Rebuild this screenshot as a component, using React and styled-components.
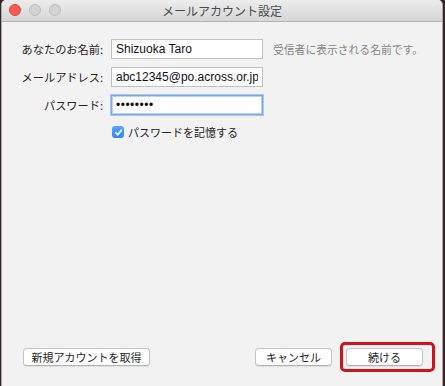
import React from "react";
import styled, { createGlobalStyle } from "styled-components";

const Global = createGlobalStyle`
  html, body { margin: 0; padding: 0; background: #3a2424; height: 386px; overflow: hidden; }
  #root { height: 386px; }
  * { box-sizing: border-box; }
`;

const Window = styled.div`
  margin-left: 1px;
  width: 442px;
  height: 386px;
  background: #f2f2f2;
  border-left: 1px solid #a8a8a8;
  border-right: 1px solid #a8a8a8;
  border-radius: 5px 5px 0 0;
  overflow: hidden;
  display: flex;
  flex-direction: column;
  font-family: "Liberation Sans", "Noto Sans CJK JP", sans-serif;
  color: #1e1e1e;
`;

const TitleBar = styled.div`
  height: 22px;
  flex: none;
  background: linear-gradient(#ececec, #d6d6d6);
  border-bottom: 1px solid #b2b2b2;
  display: flex;
  align-items: center;
  position: relative;
  padding-left: 7px;
  gap: 8px;
`;

const Light = styled.span`
  width: 12px;
  height: 12px;
  border-radius: 50%;
  background: ${(p) => (p.$red ? "#fc5b55" : "#d2d2d2")};
  border: 1px solid ${(p) => (p.$red ? "#e0443e" : "#bcbcbc")};
  margin-top: -1px;
`;

const Title = styled.div`
  position: absolute;
  left: 0;
  right: 0;
  top: 0;
  line-height: 21px;
  text-align: center;
  font-family: "Noto Sans CJK JP", sans-serif;
  font-size: 12px;
  color: #4a4a4a;
  pointer-events: none;
`;

const Body = styled.div`
  flex: 1;
  display: flex;
  flex-direction: column;
`;

const Form = styled.div`
  display: grid;
  grid-template-columns: 101px 152px auto;
  column-gap: 8px;
  row-gap: 8px;
  align-items: center;
  padding-top: 17px;
`;

const Label = styled.label`
  text-align: right;
  font-family: "Noto Sans CJK JP", sans-serif;
  font-size: 11.2px;
  color: #222;
  white-space: nowrap;
`;

const Field = styled.input`
  width: 152px;
  height: 20px;
  margin: 0;
  padding: 0 4px;
  border: 1px solid ${(p) => (p.$focus ? "#78a6e8" : "#c0c0c0")};
  box-shadow: ${(p) => (p.$focus ? "0 0 0 1px #a8c8f4, inset 0 0 0 1px #b9d3f6" : "none")};
  background: #fff;
  outline: none;
  font-family: "Liberation Sans", "Noto Sans CJK JP", sans-serif;
  font-size: 12px;
  color: #111;
  letter-spacing: ${(p) => (p.type === "password" ? "0.5px" : "0")};
`;

const Hint = styled.span`
  margin-left: 2px;
  font-family: "Noto Sans CJK JP", sans-serif;
  font-size: 10.8px;
  color: #868686;
  white-space: nowrap;
`;

const CheckRow = styled.div`
  grid-column: 2 / 4;
  display: flex;
  align-items: center;
  gap: 4px;
  padding-left: 1px;
  margin-top: 1px;
`;

const Box = styled.span`
  width: 12px;
  height: 12px;
  border-radius: 3px;
  background: linear-gradient(#5aa9fd, #2f86f6);
  display: flex;
  align-items: center;
  justify-content: center;
`;

const CheckText = styled.span`
  font-family: "Noto Sans CJK JP", sans-serif;
  font-size: 11px;
  color: #222;
`;

const Footer = styled.div`
  margin-top: auto;
  display: flex;
  align-items: center;
  padding: 0 7px 14px 21px;
`;

const Button = styled.button`
  height: 18px;
  padding: 0;
  width: ${(p) => p.$w}px;
  background: #fff;
  border: 1px solid #c6c6c6;
  border-bottom-color: #b4b4b4;
  border-radius: 4px;
  box-shadow: 0 0.5px 1px rgba(0, 0, 0, 0.08);
  font-family: "Noto Sans CJK JP", sans-serif;
  font-size: 11px;
  line-height: 16px;
  color: #1e1e1e;
`;

const Spacer = styled.div`
  flex: 1;
`;

const Highlight = styled.div`
  margin-left: 8px;
  border: 3px solid #d0121b;
  border-radius: 5px;
  padding: 3px 9px 3px 3px;
  display: flex;
`;

export default function App() {
  return (
    <>
      <Global />
      <Window>
        <TitleBar>
          <Light $red />
          <Light />
          <Light />
          <Title>メールアカウント設定</Title>
        </TitleBar>
        <Body>
          <Form>
            <Label>あなたのお名前:</Label>
            <Field readOnly value="Shizuoka Taro" />
            <Hint>受信者に表示される名前です。</Hint>
            <Label>メールアドレス:</Label>
            <Field readOnly value="abc12345@po.across.or.jp" />
            <span />
            <Label>パスワード:</Label>
            <Field readOnly type="password" value="12345678" $focus />
            <span />
            <span />
            <CheckRow>
              <Box>
                <svg width="9" height="9" viewBox="0 0 10 10">
                  <path d="M2 5.3 L4.2 7.6 L8.2 2.4" fill="none" stroke="#fff" strokeWidth="1.8" strokeLinecap="round" strokeLinejoin="round" />
                </svg>
              </Box>
              <CheckText>パスワードを記憶する</CheckText>
            </CheckRow>
          </Form>
          <Footer>
            <Button $w={127}>新規アカウントを取得</Button>
            <Spacer />
            <Button $w={77}>キャンセル</Button>
            <Highlight>
              <Button $w={77}>続ける</Button>
            </Highlight>
          </Footer>
        </Body>
      </Window>
    </>
  );
}
